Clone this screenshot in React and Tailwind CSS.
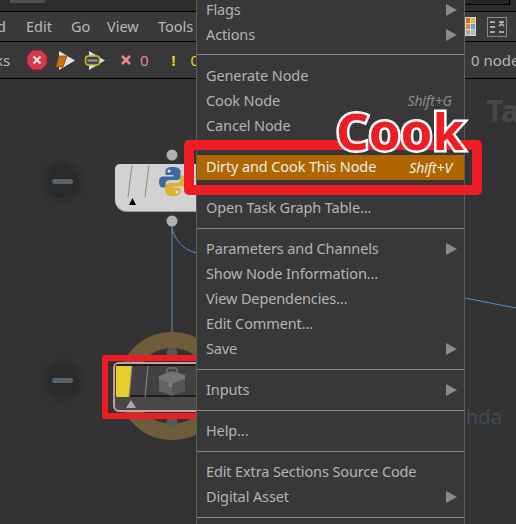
const F = { fontFamily: '"Noto Sans", sans-serif' };

function Arrow() {
  return (
    <svg width="11" height="12" viewBox="0 0 11 12" className="absolute right-[7px] top-1/2 -translate-y-1/2">
      <path d="M0 0 L11 6 L0 12 Z" fill="#8a8a8a" />
    </svg>
  );
}

function Row({ label, shortcut, arrow, active }) {
  return (
    <div className={`relative flex h-[25px] items-center justify-between pl-[9px] pr-[12px] text-[14.5px] tracking-[-0.12px] ${active ? "bg-[#b06600] pb-px text-[#ececec]" : "text-[#b4b4b4]"}`}>
      <span>{label}</span>
      {shortcut && <span className={`italic text-[14px] ${active ? "text-[#eeeeee]" : "text-[#8c8c8c]"}`}>{shortcut}</span>}
      {arrow && <Arrow />}
    </div>
  );
}

function Sep({ top = "mt-2", bottom = "mb-[7px]" }) {
  return <div className={`h-px bg-[#8a8a8a] ${top} ${bottom}`} />;
}

function Minus({ className }) {
  return (
    <div className={`absolute flex h-[43px] w-[43px] items-center justify-center rounded-full bg-[#2f2f2f] ${className}`}>
      <div className="flex h-[33px] w-[33px] items-center justify-center rounded-full bg-[#2a2a2a]">
        <div className="h-[5px] w-[21px] rounded-full bg-[#58636b]" />
      </div>
    </div>
  );
}

function Python() {
  return (
    <svg width="28" height="29" viewBox="0 0 28 29" className="absolute left-[44px] top-[3px]">
      <path d="M14 0 C8 0 6.500 2 6.500 4.500 V8 H14.500 V9.500 H4 C1 9.500 0 12 0 15 C0 18.500 1.500 20.500 4 20.500 H6.500 V17 C6.500 14.500 8.500 13 11 13 H18 C20.500 13 21.500 11.500 21.500 9.500 V4.500 C21.500 2 19 0 14 0 Z" fill="#386c9c" />
      <circle cx="10" cy="4" r="1.500" fill="#dfe8f0" />
      <path d="M14 29 C20 29 21.500 27 21.500 24.500 V21 H13.500 V19.500 H24 C27 19.500 28 17 28 14 C28 10.500 26.500 8.500 24 8.500 H21.500 V12 C21.500 14.500 19.500 16 17 16 H10 C7.500 16 6.500 17.500 6.500 19.500 V24.500 C6.500 27 9 29 14 29 Z" fill="#dcb030" />
      <circle cx="18" cy="25" r="1.500" fill="#f5ecc8" />
    </svg>
  );
}

function Toolbox() {
  return (
    <svg width="28" height="30" viewBox="0 0 28 30" className="absolute left-[43px] top-[1px]">
      <path d="M9 7 V3 Q9 1 11 1 H17 Q19 1 19 3 V7" fill="none" stroke="#666" strokeWidth="2" />
      <path d="M1 9 L14 4 L27 8 V12 L14 17 L1 13 Z" fill="#747474" />
      <path d="M1 13 L14 17 V29 L1 24 Z" fill="#636363" />
      <path d="M14 17 L27 12 V24 L14 29 Z" fill="#565656" />
      <rect x="11" y="16" width="3" height="4" fill="#828282" />
    </svg>
  );
}

export default function App() {
  return (
    <div className="relative h-[524px] w-[516px] overflow-hidden bg-[#333333]" style={F}>
      {/* top strip */}
      <div className="flex h-[11px] items-start justify-between bg-[#2c2c2c] pl-[10px] pr-[6px]">
        <div className="flex h-[3px] w-[55px] justify-end bg-[#4a4f52]">
          <div className="h-[3px] w-[20px] bg-[#2c2c2c]" />
        </div>
        <div className="h-[5px] w-[44px] border-b border-r border-black bg-[#262626]" />
      </div>
      <div className="h-px bg-black" />

      {/* menu bar */}
      <div className="relative flex h-[29px] items-center bg-[#3a3a3a] text-[14.5px] text-[#b8b8b8]">
        <span className="-ml-[3px] w-[29px]">d</span>
        <span className="w-[45px]">Edit</span>
        <span className="w-[36px]">Go</span>
        <span className="w-[51px]">View</span>
        <span>Tools</span>
        <div className="ml-auto mr-[9px] flex items-center gap-[11px]">
          <div className="grid h-[19px] w-[11px] grid-cols-2 gap-px bg-[#d8d8d8] p-px">
            <div className="bg-[#d2691e]" /><div className="bg-[#e0c020]" />
            <div className="bg-[#e8892b]" /><div className="bg-[#6f9ed0]" />
            <div className="bg-[#a8a8a8]" /><div className="bg-[#b5b5b5]" />
          </div>
          <svg width="20" height="20" viewBox="0 0 20 20">
            <rect x="0.500" y="0.500" width="19" height="19" fill="none" stroke="#8a8a8a" />
            <path d="M3 5 H8 M12 5 H17 M3 10 H8 M12 9 L14.500 7 L17 9 M3 15 H8 M12 15 H17" stroke="#a8a8a8" strokeWidth="2" fill="none" />
          </svg>
        </div>
      </div>
      <div className="h-px bg-black" />

      {/* toolbar */}
      <div className="relative flex h-9 items-center bg-[#383838] text-[15px]">
        <span className="-ml-[5px] w-[31px] text-[#b4b4b4]">ks</span>
        <svg width="22" height="22" viewBox="0 0 22 22" className="mr-[8px]">
          <path d="M7 1 H15 L21 7 V15 L15 21 H7 L1 15 V7 Z" fill="#d2394f" stroke="#9a1c30" />
          <path d="M7.500 7.500 L14.500 14.500 M14.500 7.500 L7.500 14.500" stroke="#f2e4e4" strokeWidth="2.200" />
        </svg>
        <svg width="19" height="19" viewBox="0 0 19 19" className="mr-[10px] overflow-visible">
          <path d="M3 0 L19 9.500 L3 19 Z" fill="#e4e4e4" />
          <path d="M3 5 H11 L7 16 H0 Z" fill="#c96f12" stroke="#8a4a08" strokeWidth="0.800" />
        </svg>
        <svg width="20" height="19" viewBox="0 0 20 19" className="mr-[16px] overflow-visible">
          <path d="M4 0 L20 9.500 L4 19 Z" fill="#dcdcdc" />
          <rect x="0.500" y="5" width="14" height="9" rx="3" fill="#444" stroke="#c8bd1e" strokeWidth="1.500" />
          <rect x="2.500" y="8.500" width="10" height="2" fill="#9a9a9a" />
        </svg>
        <svg width="10" height="10" viewBox="0 0 10 10" className="mr-[9px]">
          <path d="M1 1 L9 9 M9 1 L1 9" stroke="#e88a92" strokeWidth="2.500" />
        </svg>
        <span className="mr-[23px] text-[#e88a92]">0</span>
        <span className="mr-[15px] text-[14px] font-bold text-[#e6d820]">!</span>
        <span className="text-[#e6d820]">0</span>
        <span className="ml-auto mr-[-10px] w-[55px] overflow-hidden whitespace-nowrap text-[#b4b4b4]">0 nodes</span>
      </div>
      <div className="h-px bg-black" />

      {/* node canvas */}
      <div className="relative h-[445px]">
        <span className="absolute left-[486px] top-[17px] text-[30px] font-bold leading-none text-[#474747]">Ta</span>
        <span className="absolute left-[466px] top-[325px] text-[20px] leading-[26px] text-[#3e4a5a]">hda</span>

        <svg width="516" height="445" viewBox="0 0 516 445" className="absolute left-0 top-0">
          <path d="M172 146 V272" stroke="#5b8fc8" strokeWidth="1" fill="none" />
          <path d="M172 148 C174 160 182 170 196 174" stroke="#5b8fc8" strokeWidth="1" fill="none" />
          <path d="M465 219 L516 229" stroke="#5b8fc8" strokeWidth="1" fill="none" />
          <circle cx="172" cy="307" r="46" fill="none" stroke="#6f5c3a" strokeWidth="16" />
          <circle cx="172" cy="76" r="5.500" fill="#b0b0b0" />
          <circle cx="172" cy="142" r="5.500" fill="#b0b0b0" />
          <circle cx="172" cy="274" r="5.500" fill="#585858" />
          <circle cx="172" cy="343" r="5.500" fill="#585858" />
        </svg>

        <Minus className="left-[41px] top-[81px]" />
        <Minus className="left-[41px] top-[280px]" />

        {/* python node */}
        <div className="absolute left-[115px] top-[85px] h-[48px] w-[90px] rounded-bl-[12px] rounded-tl-[5px] border-b border-[#9a9a9a] bg-[#d2d2d2]">
          <svg width="40" height="48" viewBox="0 0 40 48" className="absolute left-0 top-0">
            <path d="M17 1 L13 33 M34 1 L30 33" stroke="#8c8c8c" strokeWidth="1" />
            <path d="M18 35 L25 35 L21.500 28 Z" fill="#000" transform="translate(-4 6)" />
          </svg>
          <Python />
        </div>

        {/* toolbox node */}
        <div className="absolute left-[113px] top-[283px] h-[50px] w-[90px] overflow-hidden rounded-l-[6px] border-2 border-[#c9a0a0] bg-[#484848]">
          <div className="relative h-[33px] border-b-2 border-t-2 border-[#1c1c1c] bg-[#414141]">
            <svg width="40" height="33" viewBox="0 0 40 33" className="absolute left-0 top-[-2px]">
              <path d="M1 2 H17 L14 33 H1 Z" fill="#e6cf2c" />
              <path d="M17 2 L14 33 M33 2 L30 33" stroke="#8a8a8a" strokeWidth="1" />
            </svg>
            <Toolbox />
          </div>
          <svg width="14" height="9" viewBox="0 0 14 9" className="absolute left-[11px] top-[36px]">
            <path d="M0 8 H10 L5 0 Z" fill="#a8a8a8" />
          </svg>
        </div>

        {/* red highlight around node */}
        <div className="absolute left-[102px] top-[276px] h-[64px] w-[94px] rounded-[3px] border-[6px] border-r-0 border-[#ee1c25]" />
      </div>

      {/* context menu */}
      <div className="absolute left-[196px] top-[-3px] w-[269px] border-x border-[#5c5c5c] bg-[#383838]">
        <Row label="Flags" arrow />
        <Row label="Actions" arrow />
        <Sep bottom="mb-[8px]" top="mt-[7px]" />
        <Row label="Generate Node" />
        <Row label="Cook Node" shortcut="Shift+G" />
        <Row label="Cancel Node" />
        <Sep top="mt-2" bottom="mb-2" />
        <Row label="Dirty and Cook This Node" shortcut="Shift+V" active />
        <Sep top="mt-[7px]" bottom="mb-[7px]" />
        <Row label="Open Task Graph Table..." />
        <Sep top="mt-2" bottom="mb-[7px]" />
        <Row label="Parameters and Channels" arrow />
        <Row label="Show Node Information..." />
        <Row label="View Dependencies..." />
        <Row label="Edit Comment..." />
        <Row label="Save" arrow />
        <Sep />
        <Row label="Inputs" arrow />
        <Sep />
        <Row label="Help..." />
        <Sep />
        <Row label="Edit Extra Sections Source Code" />
        <Row label="Digital Asset" arrow />
        <Sep />
        <div className="h-[10px]" />
      </div>

      {/* callout */}
      <div className="absolute left-[184px] top-[140px] h-[55px] w-[298px] rounded-[5px] border-[10px] border-[#ee1c25]" />
      <span className="absolute left-[336px] top-[96px] text-[51px] font-bold leading-[68px] text-[#ee1c25] [-webkit-text-stroke:5px_white] [paint-order:stroke_fill]">Cook</span>
    </div>
  );
}
